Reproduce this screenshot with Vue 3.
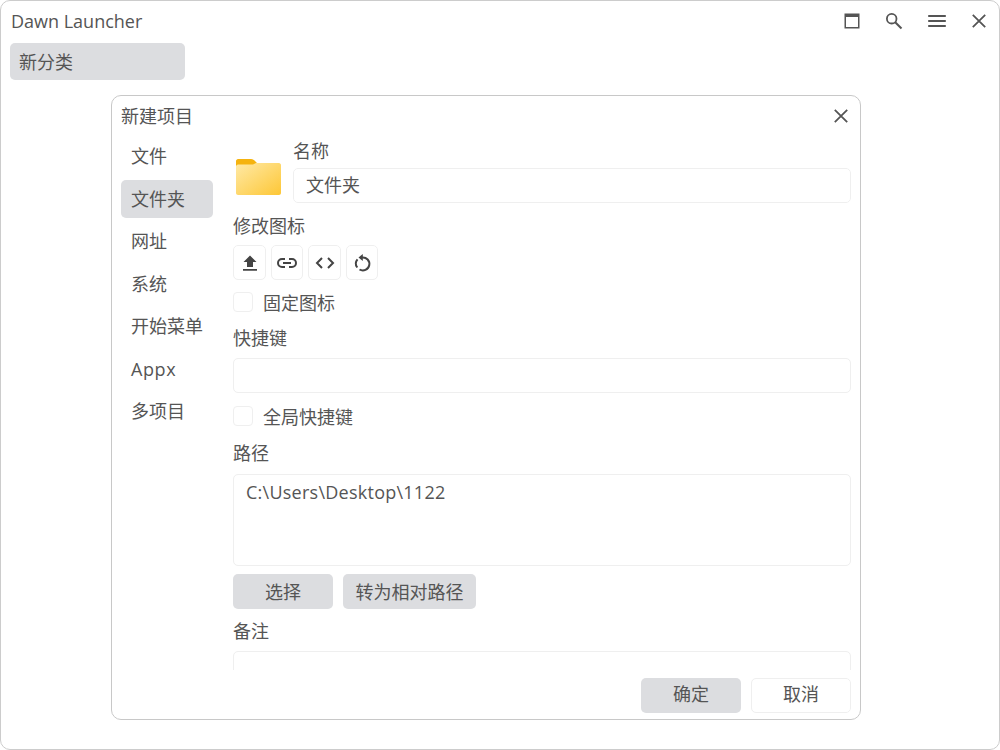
<script setup>
const navItems = ['文件', '文件夹', '网址', '系统', '开始菜单', 'Appx', '多项目']
</script>

<template>
  <div class="window">
    <header class="titlebar">
      <span class="app-title">Dawn Launcher</span>
      <div class="win-actions">
        <svg class="ico" viewBox="0 0 24 24"><path fill="#555" d="M4.500 4.500h15v15h-15z"/><path fill="#fff" d="M6 8h12v10H6z"/></svg>
        <svg class="ico" viewBox="0 0 24 24"><circle cx="9.700" cy="9.700" r="4.800" fill="none" stroke="#555" stroke-width="1.800"/><path d="M13.200 13.200 19.500 19.500" stroke="#555" stroke-width="2" fill="none"/></svg>
        <svg class="ico" viewBox="0 0 24 24"><path d="M3.200 7h17.600M3.200 12h17.600M3.200 17h17.600" stroke="#555" stroke-width="1.800" fill="none"/></svg>
        <svg class="ico" viewBox="0 0 24 24"><path d="M5.800 5.800l12.400 12.400M18.200 5.800L5.800 18.200" stroke="#555" stroke-width="1.800" fill="none"/></svg>
      </div>
    </header>
    <div class="tabs"><div class="tab">新分类</div></div>

    <section class="dialog">
      <div class="dlg-head">
        <span class="dlg-title">新建项目</span>
        <svg class="ico" viewBox="0 0 24 24"><path d="M5.800 5.800l12.400 12.400M18.200 5.800L5.800 18.200" stroke="#555" stroke-width="1.800" fill="none"/></svg>
      </div>
      <div class="dlg-main">
        <nav class="side">
          <div v-for="(n, i) in navItems" :key="n" class="side-item" :class="{ active: i === 1, latin: n === 'Appx' }">{{ n }}</div>
        </nav>
        <div class="form">
          <div class="name-row">
            <svg class="folder" viewBox="0 0 45 36">
              <defs>
                <linearGradient id="fg" x1="0" y1="0" x2="1" y2="1">
                  <stop offset="0" stop-color="#ffe9a6"/>
                  <stop offset="1" stop-color="#fdc736"/>
                </linearGradient>
              </defs>
              <path fill="#f5b30f" d="M2 0h13c2 0 3 1 4 2l3 3h21v10H0V2C0 1 1 0 2 0z"/>
              <path fill="url(#fg)" d="M0 7.500c0-1 1-2 2-2l15 0 3-1.500h23c1 0 2 1 2 2v28c0 1-1 2-2 2H2c-1 0-2-1-2-2z"/>
            </svg>
            <div class="name-col">
              <label class="lbl name-lbl">名称</label>
              <div class="input name-input">文件夹</div>
            </div>
          </div>
          <label class="lbl icon-lbl">修改图标</label>
          <div class="icon-btns">
            <button class="icon-btn w33"><svg class="ico" viewBox="0 0 24 24"><path fill="#444" d="M12 4.500l6.500 6.500h-3.500v5H9v-5H5.500zM5 18h14v1.800H5z"/></svg></button>
            <button class="icon-btn w32"><svg class="ico" viewBox="0 0 24 24"><path fill="none" stroke="#444" stroke-width="2" d="M10 8H7a4 4 0 0 0 0 8h3M14 8h3a4 4 0 0 1 0 8h-3M8 12h8"/></svg></button>
            <button class="icon-btn w33"><svg class="ico" viewBox="0 0 24 24"><path fill="none" stroke="#444" stroke-width="2" d="M9 7l-5 5 5 5M15 7l5 5-5 5"/></svg></button>
            <button class="icon-btn w32"><svg class="ico" viewBox="0 0 24 24"><path fill="none" stroke="#444" stroke-width="2" d="M12 6.500A6.500 6.500 0 1 1 9.500 18.500M7.300 16.500A6.500 6.500 0 0 1 7.500 8.300"/><path fill="#444" d="M12.800 3v7L8.500 6.500z"/></svg></button>
          </div>
          <div class="check-row first-check"><span class="box"></span><span>固定图标</span></div>
          <label class="lbl key-lbl">快捷键</label>
          <div class="input key-input"></div>
          <div class="check-row second-check"><span class="box"></span><span>全局快捷键</span></div>
          <label class="lbl path-lbl">路径</label>
          <div class="input area">C:\Users\Desktop\1122</div>
          <div class="btn-row">
            <button class="btn gray w100">选择</button>
            <button class="btn gray w133">转为相对路径</button>
          </div>
          <label class="lbl note-lbl">备注</label>
          <div class="input note"></div>
        </div>
      </div>
      <div class="dlg-foot">
        <button class="btn gray w100">确定</button>
        <button class="btn plain w100">取消</button>
      </div>
    </section>
  </div>
</template>

<style>
html, body { margin: 0; background: #fff; }
</style>

<style scoped>
.window {
  box-sizing: border-box;
  width: 1000px;
  height: 750px;
  border: 1px solid #ccc;
  border-radius: 10px;
  background: #fff;
  color: #555;
  font-family: "Open Sans", "Noto Sans CJK SC", sans-serif;
  font-size: 18px;
  overflow: hidden;
}
.titlebar {
  box-sizing: border-box;
  display: flex;
  align-items: center;
  justify-content: space-between;
  height: 42px;
  padding: 0 8px 2px 10px;
}
.app-title { font-size: 18px; line-height: 40px; }
.win-actions { display: flex; gap: 18.500px; }
.ico { display: block; width: 24px; height: 24px; flex: none; }
.tabs { padding: 0 9px; height: 52px; }
.tab {
  box-sizing: border-box;
  width: 175px;
  height: 37px;
  line-height: 38px;
  padding-left: 9px;
  background: #dcdde0;
  border-radius: 5px;
}
.dialog {
  box-sizing: border-box;
  width: 750px;
  height: 625px;
  margin-left: 110px;
  border: 1px solid #c8c8c8;
  border-radius: 10px;
  background: #fff;
  display: flex;
  flex-direction: column;
}
.dlg-head {
  display: flex;
  align-items: center;
  justify-content: space-between;
  height: 40px;
  padding: 0 7px 0 9px;
  flex: none;
}
.dlg-title { margin-bottom: 2px; }
.dlg-main {
  display: flex;
  height: 534px;
  flex: none;
  overflow: hidden;
}
.side {
  box-sizing: border-box;
  width: 121px;
  padding: 1px 0 0 9px;
  flex: none;
  display: flex;
  flex-direction: column;
  gap: 4.500px;
}
.side-item {
  box-sizing: border-box;
  width: 92px;
  height: 38px;
  line-height: 38px;
  padding-left: 10px;
  border-radius: 5px;
}
.side-item.active { background: #dcdde0; }
.side-item.latin { letter-spacing: 0.6px; }
.form { width: 618px; flex: none; display: flex; flex-direction: column; }
.form > * { flex: none; }
.name-row { display: flex; }
.folder { width: 45px; height: 36px; margin: 23px 12px 0 3px; flex: none; }
.name-col { flex: 1; min-width: 0; }
.lbl { display: block; line-height: 24px; }
.input {
  box-sizing: border-box;
  border: 1px solid #efefef;
  border-radius: 5px;
  background: #fff;
}
.name-lbl { height: 24px; margin-top: 3px; }
.name-input { height: 35px; line-height: 33px; padding-left: 12px; margin-top: 5px; }
.icon-lbl { margin-top: 11px; }
.icon-btns { display: flex; gap: 5px; margin-top: 7px; }
.icon-btn {
  box-sizing: border-box;
  height: 35px;
  padding: 0;
  border: 1px solid #efefef;
  border-radius: 5px;
  background: #fff;
  display: flex;
  align-items: center;
  justify-content: center;
}
.w33 { width: 33px; }
.w32 { width: 32px; }
.check-row { display: flex; align-items: center; gap: 10px; height: 24px; }
.box {
  box-sizing: border-box;
  width: 20px;
  height: 20px;
  border: 1px solid #efefef;
  border-radius: 4px;
}
.first-check { margin-top: 10px; }
.key-lbl { margin-top: 12px; }
.key-input { height: 35px; margin-top: 8px; }
.second-check { margin-top: 11px; }
.path-lbl { margin-top: 13px; }
.area {
  height: 92px;
  margin-top: 9px;
  padding: 5px 12px;
  line-height: 24px;
  letter-spacing: 0.25px;
}
.btn-row { display: flex; gap: 10px; margin-top: 8px; }
.btn {
  box-sizing: border-box;
  height: 35px;
  padding: 0 0 2px;
  border-radius: 5px;
  font: inherit;
  color: inherit;
  text-align: center;
}
.gray { background: #dcdde0; border: 0; }
.plain { background: #fff; border: 1px solid #efefef; }
.w100 { width: 100px; }
.w133 { width: 133px; }
.note-lbl { margin-top: 10px; }
.note { height: 60px; margin-top: 8px; }
.dlg-foot {
  display: flex;
  justify-content: flex-end;
  gap: 10px;
  padding: 8px 9px 0 0;
}
.dlg-foot .btn { padding-bottom: 5px; }
</style>
